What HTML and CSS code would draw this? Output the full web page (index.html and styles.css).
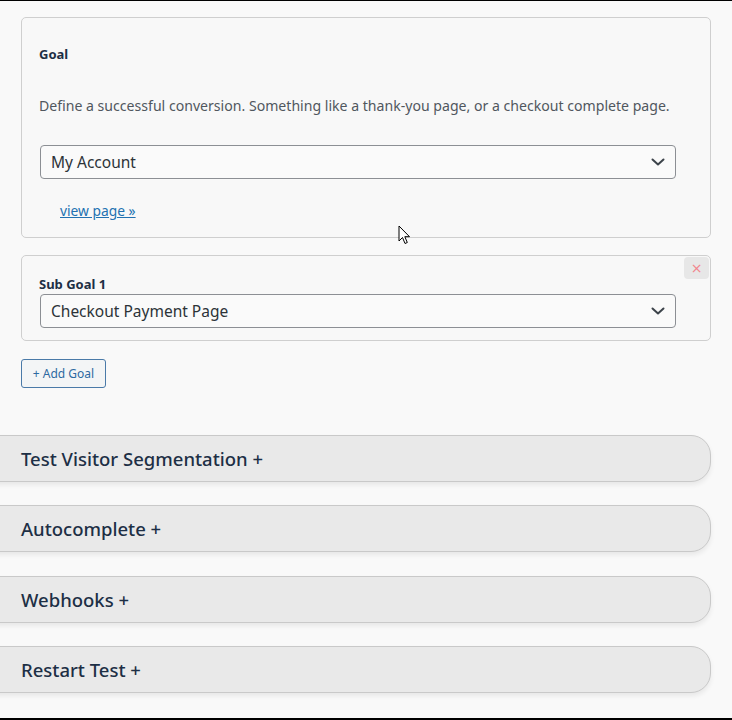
FILE: index.html
```html
<!DOCTYPE html>
<html lang="en">
<head>
<meta charset="utf-8">
<title>Goals</title>
<link rel="stylesheet" href="styles.css">
</head>
<body>
<div class="frame">
  <div class="content">
    <section class="card goal-card">
      <h4 class="label goal-label">Goal</h4>
      <p class="desc">Define a successful conversion. Something like a thank-you page, or a checkout complete page.</p>
      <div class="select">
        <span>My Account</span>
        <svg class="chev" width="14" height="8" viewBox="0 0 14 8"><path d="M1.5 1.5 L7 6.5 L12.5 1.5" fill="none" stroke="#3c434a" stroke-width="2" stroke-linecap="round" stroke-linejoin="round"/></svg>
      </div>
      <a class="view-link" href="#">view page »</a>
    </section>

    <section class="card sub-card">
      <button class="remove" type="button">×</button>
      <h4 class="label sub-label">Sub Goal 1</h4>
      <div class="select">
        <span>Checkout Payment Page</span>
        <svg class="chev" width="14" height="8" viewBox="0 0 14 8"><path d="M1.5 1.5 L7 6.5 L12.5 1.5" fill="none" stroke="#3c434a" stroke-width="2" stroke-linecap="round" stroke-linejoin="round"/></svg>
      </div>
    </section>

    <button class="add-goal" type="button">+ Add Goal</button>

    <div class="accordions">
      <div class="acc">Test Visitor Segmentation +</div>
      <div class="acc">Autocomplete +</div>
      <div class="acc">Webhooks +</div>
      <div class="acc">Restart Test +</div>
    </div>
  </div>
  <svg class="cursor" width="14" height="20" viewBox="0 0 14 20"><path d="M1 1 L1 16 L4.5 12.5 L7 18.5 L9.3 17.5 L6.8 11.7 L11.5 11.7 Z" fill="#fff" stroke="#000" stroke-width="1" stroke-linejoin="round"/></svg>
</div>
</body>
</html>
```

FILE: styles.css
```css
* { box-sizing: border-box; }
html, body { margin: 0; padding: 0; }
body {
  background: #f9f9f9;
  font-family: "Noto Sans", "Open Sans", sans-serif;
  color: #3c434a;
}
.frame {
  position: relative;
  height: 720px;
  border-top: 1px solid #000;
  border-bottom: 2px solid #000;
  overflow: hidden;
}
.content {
  padding: 16px 0 0 21px;
  width: 711px;
}
.card {
  position: relative;
  border: 1px solid #cfcfcf;
  border-radius: 5px;
  background: #f8f8f8;
  padding: 0 34px 0 18px;
}
.goal-card {
  height: 221px;
}
.sub-card {
  margin-top: 17px;
  height: 86px;
}
.label {
  margin: 0 0 0 -1px;
  font-size: 13px;
  font-weight: 700;
  line-height: 20px;
  color: #1d2f45;
}
.goal-label { padding-top: 26px; }
.sub-label { padding-top: 18px; }
.desc {
  margin: 32px 0 0 -1px;
  font-size: 14.1px;
  line-height: 20px;
  color: #50575e;
  white-space: nowrap;
}
.select {
  display: flex;
  align-items: center;
  justify-content: space-between;
  height: 34px;
  border: 1px solid #8c8f94;
  border-radius: 4px;
  background: #fafafa;
  padding: 0 10px 0 10px;
  font-size: 15.5px;
  color: #2c3338;
}
.goal-card .select { margin-top: 29px; }
.chev { display: block; }
.view-link {
  display: inline-block;
  margin: 22px 0 0 20px;
  font-size: 13.8px;
  line-height: 20px;
  color: #2271b1;
  text-decoration: underline;
}
.remove {
  position: absolute;
  top: 1px;
  right: 1px;
  width: 25px;
  height: 22px;
  border: 0;
  border-radius: 4px;
  background: #e7e7e7;
  color: #f2848c;
  font-family: "DejaVu Sans", sans-serif;
  font-size: 14px;
  line-height: 22px;
  padding: 0;
}
.add-goal {
  display: block;
  margin-top: 18px;
  width: 85px;
  height: 29px;
  border: 1px solid #4a7aa8;
  border-radius: 3px;
  background: #f3f5f6;
  color: #2d6aa1;
  font-family: "Noto Sans", sans-serif;
  font-size: 12px;
  padding: 0;
}
.accordions {
  margin-top: 47px;
  display: flex;
  flex-direction: column;
  gap: 23.3px;
}
.acc {
  margin-left: -41px;
  height: 47px;
  padding-left: 40px;
  border: 1px solid #c9c9c9;
  border-radius: 0 20px 20px 0;
  background: #e9e9e9;
  box-shadow: 0 3px 5px rgba(0, 0, 0, 0.07);
  font-size: 18.5px;
  line-height: 45px;
  color: #1d2f45;
  font-weight: 500;
}
.cursor {
  position: absolute;
  left: 398px;
  top: 224px;
}
```
